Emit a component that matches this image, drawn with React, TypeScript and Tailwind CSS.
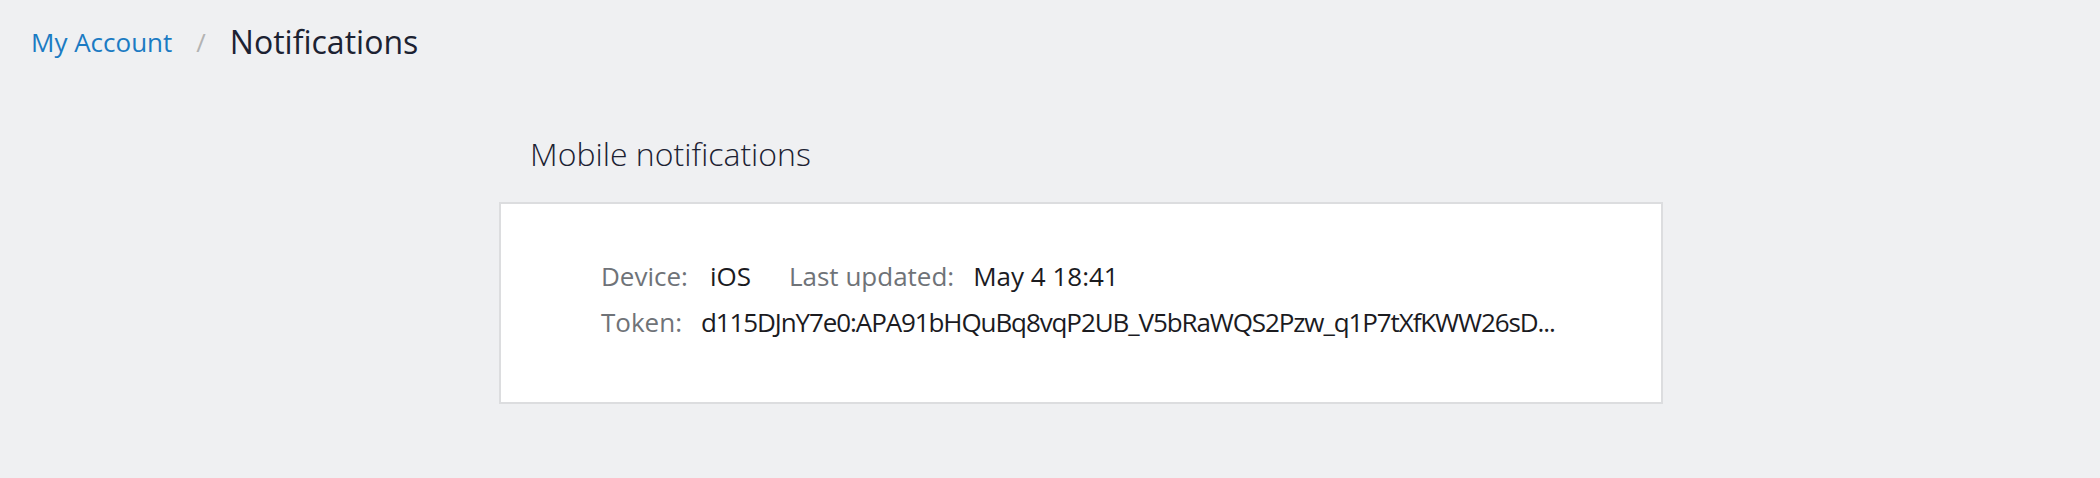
export default function App() {
  const font = { fontFamily: '"Open Sans", "Liberation Sans", sans-serif' };
  return (
    <div className="min-h-[478px] w-[2100px] bg-[#eff0f2]" style={font}>
      {/* Breadcrumb */}
      <div className="flex items-center h-[86px] pl-[31px] pb-[2px]">
        <a className="text-[26px] text-[#1b7bc3]">My Account</a>
        <span className="text-[26px] text-[#b3b3b3] mx-[24px]">/</span>
        <h1 className="text-[32px] text-[#1c2232]">Notifications</h1>
      </div>

      {/* Mobile notifications */}
      <div className="pl-[499px] w-[1663px] pt-[48px]">
        <h2 className="pl-[31px] text-[32px] font-light text-[#1c2232] leading-[40px] mb-[28px]">
          Mobile notifications
        </h2>
        <div className="bg-white border-2 border-[#dcdddf] h-[202px] pl-[100px] pt-[49px]">
          <div className="flex items-center h-[46px] text-[26px]">
            <span className="text-[#6f7378]">Device:</span>
            <span className="text-[#1b1b1f] ml-[22px]">iOS</span>
            <span className="text-[#6f7378] ml-[38px]">Last updated:</span>
            <span className="text-[#1b1b1f] ml-[19px]">May 4 18:41</span>
          </div>
          <div className="flex items-center h-[46px] text-[26px]">
            <span className="text-[#6f7378]">Token:</span>
            <span className="text-[#1b1b1f] ml-[19px] tracking-[-1.1px]">
              d115DJnY7e0:APA91bHQuBq8vqP2UB_V5bRaWQS2Pzw_q1P7tXfKWW26sD...
            </span>
          </div>
        </div>
      </div>
    </div>
  );
}
